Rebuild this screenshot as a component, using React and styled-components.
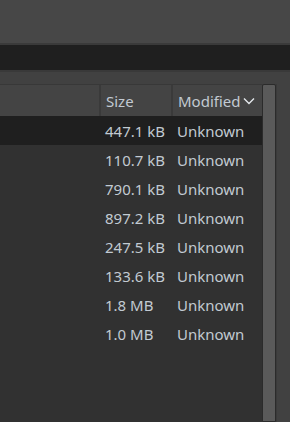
import React from "react";
import styled, { createGlobalStyle } from "styled-components";

const GlobalStyle = createGlobalStyle`
  html, body {
    margin: 0;
    padding: 0;
    background: #414141;
    overflow: hidden;
  }
  body {
    font-family: "Noto Sans", "Open Sans", sans-serif;
  }
`;

const Screen = styled.div`
  width: 290px;
  height: 422px;
  display: flex;
  flex-direction: column;
  background: #414141;
`;

const TopBar = styled.div`
  height: 43px;
  background: #474747;
  flex-shrink: 0;
`;

const PathBar = styled.div`
  height: 25px;
  background: #1f1f1f;
  border-top: 2px solid #3a3a3a;
  border-bottom: 2px solid #393939;
  flex-shrink: 0;
`;

const Panel = styled.div`
  flex: 1;
  display: flex;
  padding-top: 12px;
  min-height: 0;
`;

const Table = styled.div`
  width: 262px;
  display: flex;
  flex-direction: column;
  background: #313131;
`;

const cols = "101px 72px 89px";

const HeaderRow = styled.div`
  display: grid;
  grid-template-columns: ${cols};
  height: 31px;
  background: #444444;
  border-top: 1px solid #383838;
`;

const HeaderCell = styled.div`
  display: flex;
  align-items: center;
  padding-left: ${(p) => (p.$first ? 0 : 5)}px;
  border-right: 2px solid #3a3a3a;
  color: #c2cad2;
  font-size: 15px;
  gap: 1px;
  &:last-child {
    border-right: none;
  }
`;

const Row = styled.div`
  display: grid;
  grid-template-columns: ${cols};
  height: 29px;
  align-items: center;
  background: ${(p) => (p.$selected ? "#1f1f1f" : "transparent")};
`;

const Cell = styled.div`
  padding-left: 4px;
  color: #c2cad2;
  font-size: 15px;
  white-space: nowrap;
`;

const Track = styled.div`
  width: 15px;
  background: #3a3a3a;
  display: flex;
  padding-right: 1px;
  box-sizing: border-box;
`;

const Thumb = styled.div`
  flex: 1;
  background: #5a5a5a;
  border: 1px solid #2b2b2b;
  border-radius: 2px 2px 0 0;
`;

const Strip = styled.div`
  flex: 1;
  background: #414141;
`;

const Chevron = () => (
  <svg width="12" height="8" viewBox="0 0 12 8" style={{ marginLeft: 1 }}>
    <path d="M1 1.5 L6 6.5 L11 1.5" fill="none" stroke="#e4e8ec" strokeWidth="1.4" />
  </svg>
);

const files = [
  "447.1 kB",
  "110.7 kB",
  "790.1 kB",
  "897.2 kB",
  "247.5 kB",
  "133.6 kB",
  "1.8 MB",
  "1.0 MB",
];

const App = () => {
  return (
    <Screen>
      <GlobalStyle />
      <TopBar />
      <PathBar />
      <Panel>
        <Table>
          <HeaderRow>
            <HeaderCell $first />
            <HeaderCell>Size</HeaderCell>
            <HeaderCell>
              Modified
              <Chevron />
            </HeaderCell>
          </HeaderRow>
          {files.map((size, i) => (
            <Row key={i} $selected={i === 0}>
              <Cell />
              <Cell>{size}</Cell>
              <Cell>Unknown</Cell>
            </Row>
          ))}
        </Table>
        <Track>
          <Thumb />
        </Track>
        <Strip />
      </Panel>
    </Screen>
  );
};

export default App;
